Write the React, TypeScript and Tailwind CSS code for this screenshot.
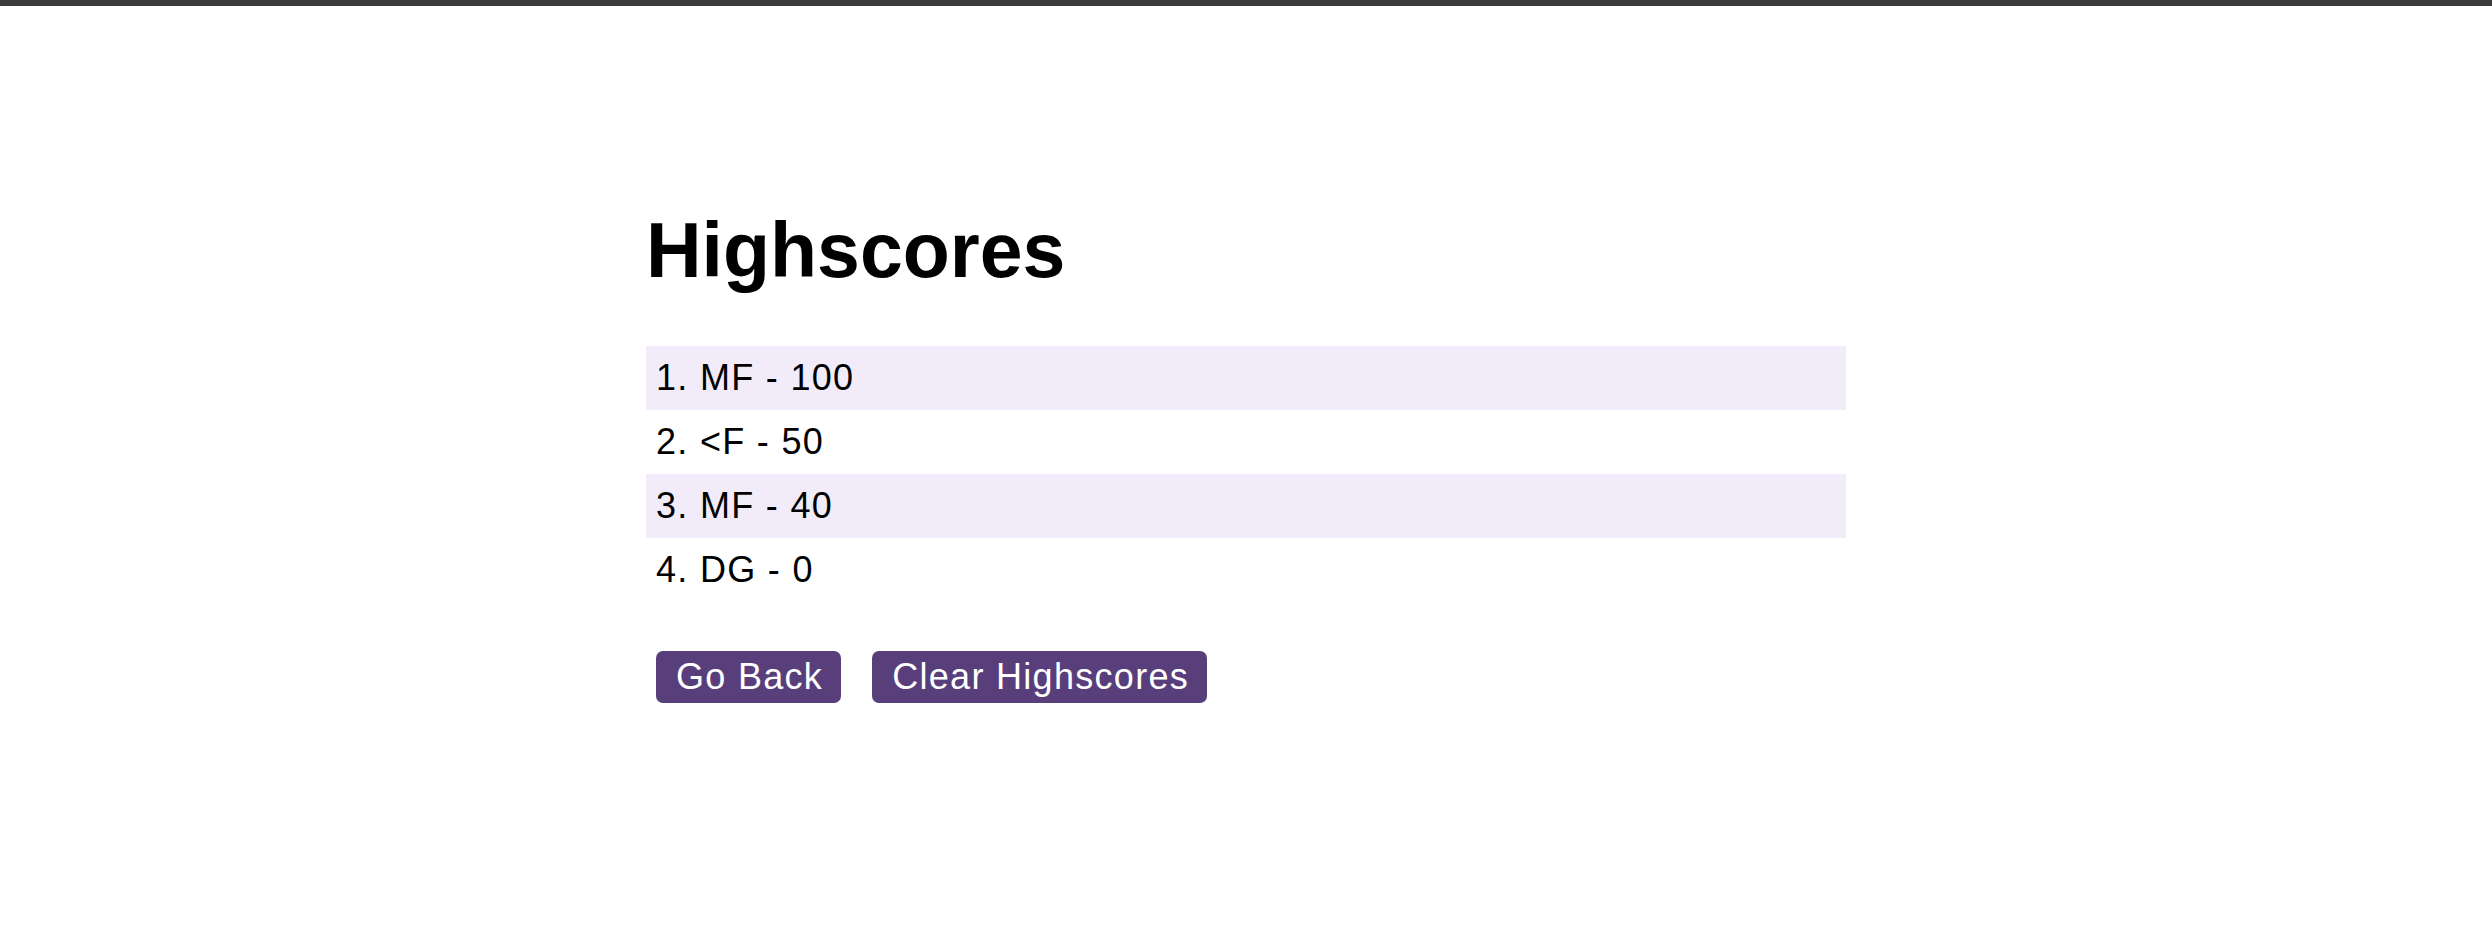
const SCORES = [
  { initials: 'MF', score: 100 },
  { initials: '<F', score: 50 },
  { initials: 'MF', score: 40 },
  { initials: 'DG', score: 0 },
]

export default function App() {
  return (
    <div className="min-h-screen bg-white text-black" style={{ fontFamily: '"Liberation Sans", Arial, sans-serif' }}>
      <div className="h-[6px] bg-[#3b3b3b]" />

      <main className="w-[1200px] mx-auto pt-[206px]">
        <h1 className="text-[77px] font-bold leading-none">Highscores</h1>

        {/* score list */}
        <ol className="mt-[57px]">
          {SCORES.map((s, i) => (
            <li
              key={i}
              className={`h-[64px] leading-[63px] px-[10px] text-[36px] tracking-[1.3px] ${i % 2 === 0 ? 'bg-[#f2ecfa]' : ''}`}
            >
              {i + 1}. {s.initials} - {s.score}
            </li>
          ))}
        </ol>

        <div className="flex gap-[31px] mt-[49px] ml-[10px]">
          <button className="h-[52px] pl-[20px] pr-[18px] pb-[1px] rounded-[7px] bg-[#583f7c] text-white text-[36px] tracking-[1.3px] leading-none">
            Go Back
          </button>
          <button className="h-[52px] pl-[20px] pr-[18px] pb-[1px] rounded-[7px] bg-[#583f7c] text-white text-[36px] tracking-[1.3px] leading-none">
            Clear Highscores
          </button>
        </div>
      </main>
    </div>
  )
}
